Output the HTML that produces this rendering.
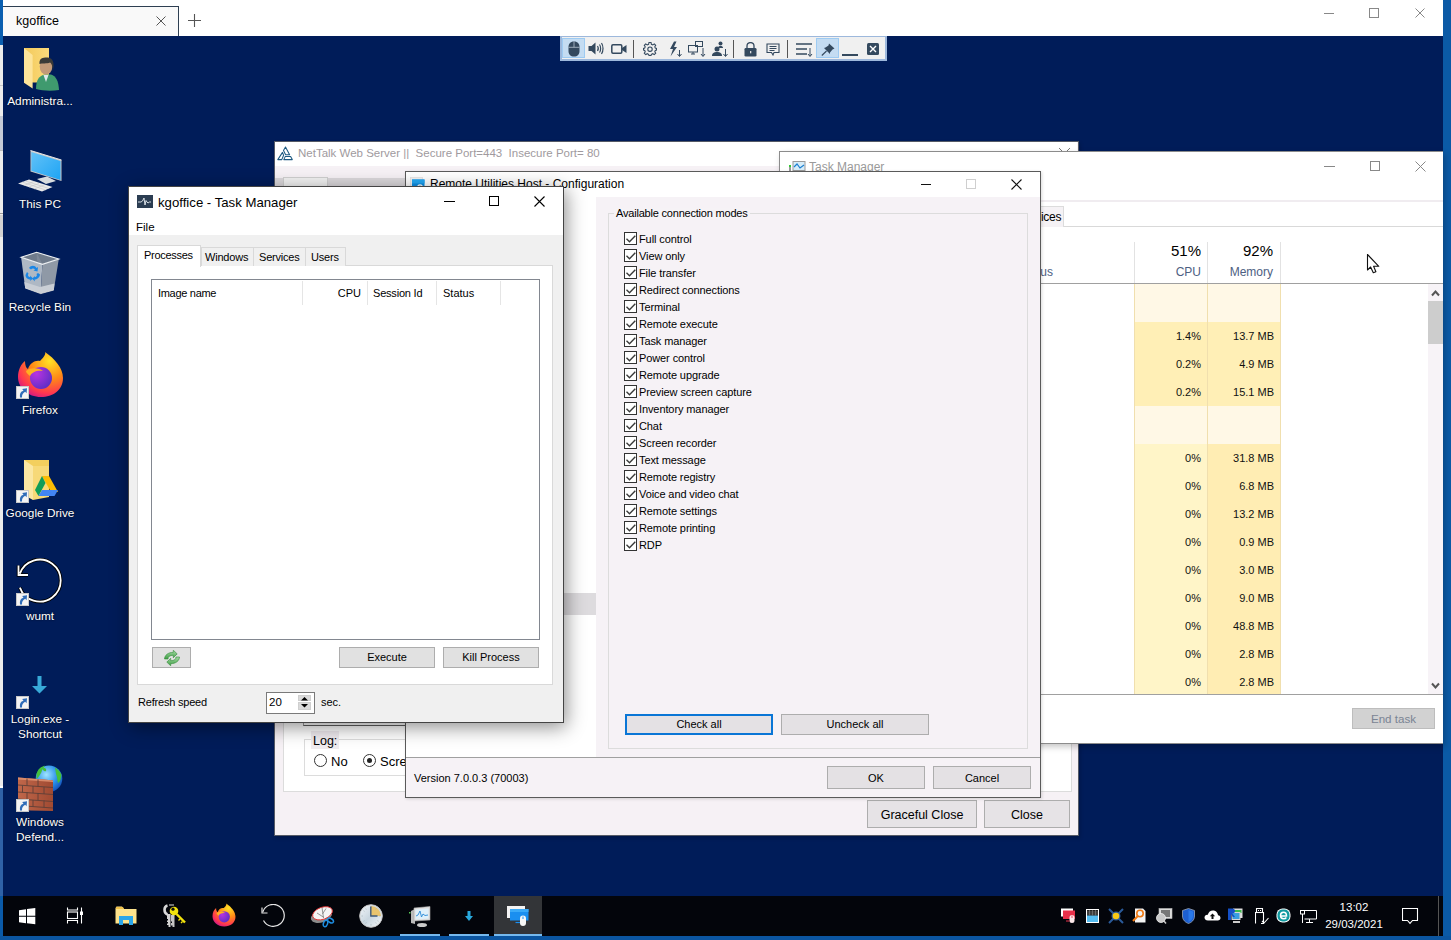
<!DOCTYPE html>
<html><head><meta charset="utf-8">
<style>
*{box-sizing:border-box;margin:0;padding:0}
html,body{width:1451px;height:940px;overflow:hidden;background:#fff;font-family:"Liberation Sans",sans-serif;color:#000}
.a{position:absolute}
.t{position:absolute;white-space:nowrap;line-height:1}
#desk{left:3px;top:36px;width:1440px;height:860px;background:#001c59}
#taskbar{left:3px;top:896px;width:1440px;height:40px;background:#03050b}
.lbl{position:absolute;color:#fff;font-size:11.5px;text-align:center;width:80px;left:0;line-height:15px;text-shadow:0 1px 2px #000}
.win{position:absolute;overflow:hidden;isolation:isolate}
.btn{position:absolute;background:#e1e1e1;border:1px solid #adadad;font-size:11px;text-align:center;color:#000}
.cb{position:absolute;width:13px;height:13px;border:1px solid #333;background:#fff}
</style></head><body>
<!-- left strip -->
<div class="a" style="left:0;top:0;width:3px;height:46px;background:#0a5fb0"></div>
<div class="a" style="left:0;top:45px;width:3px;height:743px;background:#ececec"></div>
<div class="a" style="left:0;top:85px;width:3px;height:1px;background:#c8c8c8"></div>
<div class="a" style="left:0;top:116px;width:3px;height:34px;background:#c4cad6"></div>
<div class="a" style="left:0;top:150px;width:3px;height:1px;background:#bbb"></div>
<div class="a" style="left:0;top:213px;width:3px;height:1px;background:#999"></div>
<div class="a" style="left:0;top:215px;width:3px;height:22px;background:#d2d2d2"></div>
<div class="a" style="left:0;top:786px;width:3px;height:2px;background:#fff"></div>
<div class="a" style="left:0;top:788px;width:3px;height:108px;background:#2f62a6"></div>
<div class="a" style="left:0;top:896px;width:3px;height:44px;background:#0a5aa8"></div>
<!-- right strip -->
<div class="a" style="left:1443px;top:0;width:8px;height:940px;background:#0b5aa6"></div>
<div class="a" style="left:0;top:936px;width:1451px;height:4px;background:#0b55a0"></div>

<!-- browser tab bar -->
<div class="a" style="left:3px;top:6px;width:176px;height:30px;background:#f9f9f9;border-top:1px solid #2e3f52;border-right:1px solid #2e3f52"></div>
<div class="t" style="left:16px;top:15px;font-size:12.5px;color:#000">kgoffice</div>

<div class="a" id="desk"></div>
<div class="a" id="taskbar"></div>

<!-- ============ Desktop icons ============ -->
<svg class="a" style="left:0;top:40px" width="80" height="55" viewBox="0 0 80 55">
  <defs><linearGradient id="fdg" x1="0" y1="0" x2="1" y2="0"><stop offset="0" stop-color="#f3c95a"/><stop offset="1" stop-color="#fbdb7c"/></linearGradient></defs>
  <path d="M24 8 H49 V42.5 H24Z" fill="url(#fdg)"/>
  <path d="M24 8 L32.6 15 L32.6 48.6 L24 42.7Z" fill="#fde49a"/>
  <path d="M36 49 C36 40 39 35.5 45 34.5 L51 34.5 C56 36 58.5 41 59 50 C52 51 43 51 36 49Z" fill="#3f9a6e"/>
  <path d="M43.5 35 L46 42 L48.5 35Z" fill="#dfe9ee"/>
  <ellipse cx="46" cy="26.5" rx="6.3" ry="8" fill="#c29a78"/>
  <path d="M39.5 24 C39 18 43 17.5 46.5 17.5 C51 17.5 54 20 53.5 26 L53 31 C52.5 27 52 23.5 50 22.5 C47 24 42 23 39.5 24Z" fill="#3a3a38"/>
</svg>
<div class="t" style="left:0;width:80px;text-align:center;top:96px;font-size:11.8px;color:#fff;text-shadow:0 0 2px rgba(0,0,0,.8)">Administra...</div>
<svg class="a" style="left:0;top:140px" width="80" height="60" viewBox="0 0 80 60">
  <defs><linearGradient id="pcg" x1="0" y1="0" x2="1" y2="1"><stop offset="0" stop-color="#62c2f8"/><stop offset="1" stop-color="#1ea4f4"/></linearGradient></defs>
  <path d="M30.5 10.5 L61.5 20 L61.5 41 L30.5 31.5Z" fill="#c8c8c8"/>
  <path d="M31.3 12 L60.5 21 L60.5 40 L31.3 30.8Z" fill="url(#pcg)"/>
  <path d="M30.5 10.5 L61.5 20" stroke="#e6e6e6" stroke-width="1"/>
  <path d="M37 39 L47 36.5 L56 41 L46 44Z" fill="#d8dcde"/>
  <path d="M18 43.5 L29 39.5 L52.5 47 L42 51.5Z" fill="#eaeaea"/>
  <path d="M22 42 L45.5 50 M25.5 41 L49 48.5 M24 45.5 L34 41.5 M29 47 L39 43.5 M34 49 L44 45" stroke="#c4c4c4" stroke-width="0.6"/>
</svg>
<div class="t" style="left:0;width:80px;text-align:center;top:199px;font-size:11.8px;color:#fff;text-shadow:0 0 2px rgba(0,0,0,.8)">This PC</div>
<svg class="a" style="left:0;top:240px" width="80" height="60" viewBox="0 0 80 60">
  <path d="M21.1 17.3 L42.4 24.3 L40.7 53.6 L25.2 48Z" fill="#aeb8c4"/>
  <path d="M42.4 24.3 L58.8 19 L53.8 50 L40.7 53.6Z" fill="#8f99a6"/>
  <path d="M21.1 17.3 L36.6 12.3 L58.8 19 L42.4 24.3Z" fill="#6f7b8b"/>
  <path d="M36.6 12.3 L37 21 L42.4 24.3Z" fill="#7e8998"/>
  <path d="M24.3 42 L40 47 L54.5 43.5 L53.8 50 L40.7 53.6 L25.2 48Z" fill="#c9ced5"/>
  <path d="M21.1 17.3 L36.6 12.3 L58.8 19 L42.4 24.3Z" fill="none" stroke="#eef1f3" stroke-width="1.1"/>
  <path d="M25.2 48 L40.7 53.6 L53.8 50" fill="none" stroke="#dcdcdc" stroke-width="0.8"/>
  <path d="M29 28 C31 25 35 25 36.5 28 L38 27 L37.5 31.5 L33.5 30.5 L35 29.5 C34 28 32 28 31 29.5Z" fill="#1a86e6"/>
  <path d="M27 32 L25.5 35 C25.5 38 28 39.5 30.5 39.5 L30 41 L33 38.5 L30 35.5 L30.3 37 C28.5 37 27.3 35.5 28.5 33.5Z" fill="#1a86e6"/>
  <path d="M38 33 L40 34.5 C39.5 38 37 39.5 34.5 39.5 L35 41.5 L32 38.8 L35 36 L34.8 37.3 C36.5 37 37.5 35.5 36.5 34Z" fill="#1a86e6"/>
</svg>
<div class="t" style="left:0;width:80px;text-align:center;top:302px;font-size:11.8px;color:#fff;text-shadow:0 0 2px rgba(0,0,0,.8)">Recycle Bin</div>
<svg class="a" style="left:17px;top:351px" width="47" height="47" viewBox="0 0 47 47">
  <defs><radialGradient id="ff1" cx="0.7" cy="0.2" r="0.9"><stop offset="0" stop-color="#ffe226"/><stop offset="0.45" stop-color="#ff8a16"/><stop offset="0.8" stop-color="#ff3750"/><stop offset="1" stop-color="#c8158c"/></radialGradient>
  <radialGradient id="ff2" cx="0.3" cy="0.3" r="0.8"><stop offset="0" stop-color="#b833e1"/><stop offset="1" stop-color="#5b2ec4"/></radialGradient></defs>
  <path d="M28 1 C38 8 46 17 46 27 C46 39 36 46 24 46 C11 46 1 37 1 26 C1 19 4 13 8 10 C8 14 9 17 11 18 C13 12 18 9 23 10 C27 6 29 3 28 1Z" fill="url(#ff1)"/>
  <circle cx="24" cy="27" r="11" fill="url(#ff2)"/>
  <path d="M9 20 C14 16 22 17 26 20 C20 19 15 21 13 25 C11 23 9 22 9 20Z" fill="#ffb020"/>
</svg>
<svg class="a" style="left:16px;top:386px" width="13" height="13" viewBox="0 0 13 13"><rect x="0.5" y="0.5" width="12" height="12" fill="#f4f4f4" stroke="#c8c8c8"/><path d="M4 11.5 C3.5 8 4.5 5.5 7.5 4.8 L6.2 3 L11 2.2 L10.6 7.2 L9.2 5.8 C7 6.8 5.8 8.8 6 11.5Z" fill="#2f6cb8"/></svg>
<div class="t" style="left:0;width:80px;text-align:center;top:405px;font-size:11.8px;color:#fff;text-shadow:0 0 2px rgba(0,0,0,.8)">Firefox</div>
<svg class="a" style="left:23px;top:459px" width="36" height="42" viewBox="0 0 36 42">
  <path d="M1 1 L26 1 L26 38 L1 38Z" fill="#f3cf5e"/>
  <path d="M1 1 L10 7 L10 41 L1 36Z" fill="#fbe7a3"/>
  <path d="M10 7 L26 7 L26 38 L10 41Z" fill="#f7d978"/>
  <path d="M19 17 L26 17 L35 33 L28 33Z" fill="#fbbc04"/>
  <path d="M19 17 L12 31 L15.5 37 L22.5 24Z" fill="#0f9d58"/>
  <path d="M15.5 37 L31.5 37 L35 31 L19 31Z" fill="#4285f4"/>
</svg>
<svg class="a" style="left:16px;top:490px" width="13" height="13" viewBox="0 0 13 13"><rect x="0.5" y="0.5" width="12" height="12" fill="#f4f4f4" stroke="#c8c8c8"/><path d="M4 11.5 C3.5 8 4.5 5.5 7.5 4.8 L6.2 3 L11 2.2 L10.6 7.2 L9.2 5.8 C7 6.8 5.8 8.8 6 11.5Z" fill="#2f6cb8"/></svg>
<div class="t" style="left:0;width:80px;text-align:center;top:508px;font-size:11.8px;color:#fff;text-shadow:0 0 2px rgba(0,0,0,.8)">Google Drive</div>
<svg class="a" style="left:16px;top:558px" width="48" height="48" viewBox="0 0 48 48"><g fill="none" stroke-linecap="butt"><path d="M3.9 15.6 A21 21 0 1 1 3.9 29.6 M2.5 7.4 V17 H12" stroke="#000" stroke-width="3.6"/><path d="M3.9 15.6 A21 21 0 1 1 3.9 29.6 M2.5 7.4 V17 H12" stroke="#fff" stroke-width="1.8"/></g></svg>
<svg class="a" style="left:16px;top:593px" width="13" height="13" viewBox="0 0 13 13"><rect x="0.5" y="0.5" width="12" height="12" fill="#f4f4f4" stroke="#c8c8c8"/><path d="M4 11.5 C3.5 8 4.5 5.5 7.5 4.8 L6.2 3 L11 2.2 L10.6 7.2 L9.2 5.8 C7 6.8 5.8 8.8 6 11.5Z" fill="#2f6cb8"/></svg>
<div class="t" style="left:0;width:80px;text-align:center;top:611px;font-size:11.8px;color:#fff;text-shadow:0 0 2px rgba(0,0,0,.8)">wumt</div>
<svg class="a" style="left:31px;top:676px" width="17" height="18" viewBox="0 0 17 18"><path d="M6.5 0 L10.5 0 L10.5 10 L16 10 L8.5 17.5 L1 10 L6.5 10Z" fill="#38aad8"/></svg>
<svg class="a" style="left:16px;top:696px" width="13" height="13" viewBox="0 0 13 13"><rect x="0.5" y="0.5" width="12" height="12" fill="#f4f4f4" stroke="#c8c8c8"/><path d="M4 11.5 C3.5 8 4.5 5.5 7.5 4.8 L6.2 3 L11 2.2 L10.6 7.2 L9.2 5.8 C7 6.8 5.8 8.8 6 11.5Z" fill="#2f6cb8"/></svg>
<div class="t" style="left:0;width:80px;text-align:center;top:714px;font-size:11.8px;color:#fff;text-shadow:0 0 2px rgba(0,0,0,.8)">Login.exe -</div><div class="t" style="left:0;width:80px;text-align:center;top:729px;font-size:11.8px;color:#fff;text-shadow:0 0 2px rgba(0,0,0,.8)">Shortcut</div>
<svg class="a" style="left:0;top:760px" width="80" height="56" viewBox="0 0 80 56">
  <defs><radialGradient id="glb" cx="0.4" cy="0.35" r="0.7"><stop offset="0" stop-color="#9fe4ff"/><stop offset="0.6" stop-color="#2a90e8"/><stop offset="1" stop-color="#1450b8"/></radialGradient>
  <linearGradient id="brk" x1="0" y1="0" x2="1" y2="0"><stop offset="0" stop-color="#c0674a"/><stop offset="1" stop-color="#a04a32"/></linearGradient></defs>
  <circle cx="49" cy="18.7" r="13.3" fill="url(#glb)"/>
  <path d="M36.5 14 C38 9 41 6.5 45 5.8 C44 8 42 9 41.5 12 C40 15 38 18 36.5 19Z M55 7.5 C58 9 60.5 12 61.5 15 C61 19 60 22 58 23 C57 20 57.5 17 56 14Z M42 8 C45 7 47 9 46 11 C44 12 43 10 42 8Z" fill="#44c03c"/>
  <path d="M18 17.5 L44 19.5 L53 20.5 L53 51 L30 50.5 L18 49Z" fill="url(#brk)"/>
  <path d="M18 17.5 L44 19.5 L53 20.5 L53 22 L18 19.5Z" fill="#d88a6a"/>
  <g stroke="#5e4038" stroke-width="0.9" fill="none">
    <path d="M18 25 L53 27.5 M18 32 L53 34.5 M18 39 L53 41.5 M18 45.5 L53 48"/>
    <path d="M27 18.5 V25.5 M38 19.5 V26.3 M22.5 25.5 V32.3 M33 26 V33 M44 27 V34 M27 32.3 V39.3 M38 33 V40 M22.5 39.3 V46 M33 40 V46.5 M44 40.5 V47.5"/>
  </g>
</svg>
<svg class="a" style="left:16px;top:799px" width="13" height="13" viewBox="0 0 13 13"><rect x="0.5" y="0.5" width="12" height="12" fill="#f4f4f4" stroke="#c8c8c8"/><path d="M4 11.5 C3.5 8 4.5 5.5 7.5 4.8 L6.2 3 L11 2.2 L10.6 7.2 L9.2 5.8 C7 6.8 5.8 8.8 6 11.5Z" fill="#2f6cb8"/></svg>
<div class="t" style="left:0;width:80px;text-align:center;top:817px;font-size:11.8px;color:#fff;text-shadow:0 0 2px rgba(0,0,0,.8)">Windows</div><div class="t" style="left:0;width:80px;text-align:center;top:832px;font-size:11.8px;color:#fff;text-shadow:0 0 2px rgba(0,0,0,.8)">Defend...</div>




<!-- ============ Taskbar ============ -->
<svg class="a" style="left:19px;top:908px" width="17" height="17" viewBox="0 0 17 17"><path d="M0 2.3 L7 1.3 L7 7.7 L0 7.7Z M8 1.1 L16.3 0 L16.3 7.7 L8 7.7Z M0 8.7 L7 8.7 L7 15.2 L0 14.3Z M8 8.7 L16.3 8.7 L16.3 16.3 L8 15.3Z" fill="#fff"/></svg>
<svg class="a" style="left:66px;top:907px" width="18" height="17" viewBox="0 0 18 17"><g fill="none" stroke="#fff" stroke-width="1.1"><path d="M1.5 0.5 V3 H11.5 V0.5"/><rect x="1.5" y="5" width="10" height="6.5"/><path d="M1.5 16.5 V13.5 H11.5 V16.5"/><path d="M15.5 0.5 V16.5"/></g><rect x="14" y="4.5" width="3" height="3.5" fill="#fff"/></svg>
<svg class="a" style="left:115px;top:906px" width="22" height="19" viewBox="0 0 22 19"><path d="M0.5 2 L0.5 17.5 L21.5 17.5 L21.5 3 L9 3 L7 0.5 L1.5 0.5Z" fill="#fde38c"/><path d="M1 1 L8 1 L9 3 L1 3Z" fill="#f0c24c"/><path d="M4 19 L4 10 L18 10 L18 19 L14 19 L14 14 L8 14 L8 19Z" fill="#2ba6ea"/></svg>
<svg class="a" style="left:158px;top:900px" width="32" height="30" viewBox="0 0 32 30">
<path d="M9.5 5.5 C5.5 6.5 5.5 13 9.5 14.5" stroke="#d8d8d8" stroke-width="2.6" fill="none"/>
<path d="M9 14 H12.5 V27 H10.5 V25 H9 V23.5 H10 V22 H9 V20.5 H10 V19 H9Z" fill="#d4d4d4"/>
<path d="M13 15 H16.5 V27 H14.5 V25.5 H13 V23 H14 V21.5 H13Z" fill="#c4c4c4"/>
<path d="M11 5 H16" stroke="#bbb" stroke-width="1.2"/>
<circle cx="16" cy="11" r="4.3" fill="#f2e30c"/>
<circle cx="15" cy="9.2" r="1.6" fill="#111"/>
<path d="M18.5 14 L27 22.5" stroke="#f2e30c" stroke-width="2.4"/>
<path d="M22 19 L20.5 20.5 M24.5 21.5 L23 23" stroke="#f2e30c" stroke-width="1.4"/>
</svg>
<svg class="a" style="left:212px;top:903px" width="24" height="24" viewBox="0 0 47 47"><path d="M28 1 C38 8 46 17 46 27 C46 39 36 46 24 46 C11 46 1 37 1 26 C1 19 4 13 8 10 C8 14 9 17 11 18 C13 12 18 9 23 10 C27 6 29 3 28 1Z" fill="url(#ff1)"/><circle cx="24" cy="27" r="11" fill="url(#ff2)"/><path d="M9 20 C14 16 22 17 26 20 C20 19 15 21 13 25 C11 23 9 22 9 20Z" fill="#ffb020"/></svg>
<svg class="a" style="left:260px;top:904px" width="25" height="24" viewBox="0 0 25 24"><path d="M2.8 8 A11 11 0 1 1 3.5 16.5" stroke="#e6e6e6" stroke-width="1.2" fill="none"/><path d="M2 3.5 L2 9 L7.5 9" stroke="#e6e6e6" stroke-width="1.2" fill="none"/></svg>
<svg class="a" style="left:310px;top:905px" width="25" height="23" viewBox="0 0 25 23"><ellipse cx="11.5" cy="11" rx="11" ry="6.3" transform="rotate(-20 11.5 11)" fill="#8a8a8a"/><ellipse cx="12.5" cy="8.3" rx="10.3" ry="6" transform="rotate(-20 12.5 8.3)" fill="#f4f4f4" stroke="#e03535" stroke-width="0.9"/><path d="M12 2.5 L13.5 13 M7 8 L14 12.5 M16 3.5 L12.5 9" stroke="#888" stroke-width="0.9"/><ellipse cx="15.5" cy="18.5" rx="2" ry="3.3" transform="rotate(20 15.5 18.5)" fill="none" stroke="#1e8de0" stroke-width="1.5"/><ellipse cx="20.5" cy="15.5" rx="3.2" ry="2" transform="rotate(30 20.5 15.5)" fill="none" stroke="#1e8de0" stroke-width="1.5"/></svg>
<svg class="a" style="left:359px;top:904px" width="24" height="24" viewBox="0 0 24 24"><defs><linearGradient id="clg" x1="0" y1="0" x2="1" y2="1"><stop offset="0" stop-color="#f4f7fa"/><stop offset="0.5" stop-color="#c9d6e0"/><stop offset="1" stop-color="#f7f9fb"/></linearGradient></defs><circle cx="12" cy="12" r="11.3" fill="url(#clg)" stroke="#c8c8c8" stroke-width="1"/><path d="M12 2 A10 10 0 0 1 22 12 L12 12Z" fill="#e9c46e"/><path d="M12 2.5 V3.8 M12 20.2 V21.5 M2.5 12 H3.8 M20.2 12 H21.5 M6.7 4.5 L7.3 5.5 M4.5 6.7 L5.5 7.3 M17.3 4.5 L16.7 5.5 M4.5 17.3 L5.5 16.7 M6.7 19.5 L7.3 18.5 M19.5 17.3 L18.5 16.7 M17.3 19.5 L16.7 18.5" stroke="#9aa" stroke-width="0.6"/><path d="M11.8 2.5 V12.5 M11.3 12 H18.5" stroke="#3f5a7a" stroke-width="1.4" fill="none"/></svg>
<svg class="a" style="left:408px;top:906px" width="24" height="21" viewBox="0 0 24 21"><path d="M3 5 L7 3 L7 18 L3 17Z" fill="#bbb"/><rect x="1" y="6" width="1.5" height="1.5" fill="#5c5"/><path d="M6 2 L22 0.5 L22 14 L6 15Z" fill="#e0e0e0" stroke="#aaa" stroke-width="0.6"/><path d="M7.5 3.5 L20.5 2.5 L20.5 12.5 L7.5 13.5Z" fill="#dff0fa"/><path d="M8 10 L10 9 L12 5 L13.5 11 L15 8 L17 9.5 L20 9" stroke="#2a8ad8" stroke-width="0.9" fill="none"/><ellipse cx="14" cy="19" rx="5" ry="2" fill="#ccc"/></svg>
<svg class="a" style="left:465px;top:911px" width="8" height="10" viewBox="0 0 8 10"><path d="M2.5 0 H5.5 V5 H8 L4 10 L0 5 H2.5Z" fill="#29a8dc"/></svg>
<div class="a" style="left:494px;top:896px;width:48px;height:40px;background:#333538"></div>
<svg class="a" style="left:506px;top:905px" width="24" height="22" viewBox="0 0 24 22"><rect x="1" y="1" width="18" height="12" fill="#f3f3f3"/><rect x="4" y="4" width="18.5" height="11.5" fill="#1a8ff0"/><rect x="4" y="4" width="18.5" height="3" fill="#3aaaf8"/><path d="M9.5 17.5 H15" stroke="#1a8ff0" stroke-width="1.2"/><rect x="14" y="10.5" width="6" height="10.5" rx="3" fill="#f6f6f6"/><path d="M17 11.5 V14" stroke="#1a8ff0" stroke-width="1"/></svg>
<div class="a" style="left:400px;top:934px;width:40px;height:2px;background:#76b9ed"></div>
<div class="a" style="left:449px;top:934px;width:40px;height:2px;background:#76b9ed"></div>
<div class="a" style="left:494px;top:934px;width:48px;height:2px;background:#76b9ed"></div>
<!-- tray -->
<svg class="a" style="left:1061px;top:908px" width="15" height="16" viewBox="0 0 15 16"><rect x="0" y="0.5" width="12" height="8" fill="#fff"/><rect x="2" y="2.5" width="12" height="8.5" fill="#e8304a"/><rect x="8.5" y="7" width="5" height="8" rx="2.5" fill="#fbe8ea"/><path d="M11 7.5 V10" stroke="#e8304a" stroke-width="0.8"/><path d="M5 13 H8.5" stroke="#e8304a" stroke-width="1"/></svg>
<svg class="a" style="left:1086px;top:909px" width="13" height="14" viewBox="0 0 13 14"><rect x="0.5" y="0.5" width="12" height="13" fill="#55bdf2" stroke="#fff"/><rect x="1" y="1" width="11" height="5.5" fill="#222"/><path d="M1 3 H12 M1 5 H12 M3.5 1 V6.5 M6.5 1 V6.5 M9.5 1 V6.5" stroke="#888" stroke-width="0.6"/></svg>
<svg class="a" style="left:1108px;top:908px" width="16" height="16" viewBox="0 0 16 16"><path d="M1 1 L15 15 M15 1 L1 15" stroke="#2a5a9a" stroke-width="2"/><circle cx="8" cy="8" r="4.5" fill="#2a5a9a"/><circle cx="8" cy="8" r="3.3" fill="#f6c816"/></svg>
<svg class="a" style="left:1132px;top:908px" width="14" height="15" viewBox="0 0 14 15"><path d="M3 0.5 H11 L13.5 3 V14.5 H3Z" fill="#f4f4f4"/><circle cx="8" cy="5.5" r="3.2" fill="none" stroke="#f07a14" stroke-width="1.6"/><path d="M5.8 8 L1 13" stroke="#f07a14" stroke-width="2"/></svg>
<svg class="a" style="left:1156px;top:908px" width="17" height="16" viewBox="0 0 17 16"><rect x="3" y="0.5" width="13" height="10" fill="#dcdcdc" stroke="#bbb" stroke-width="0.6"/><rect x="5" y="2" width="9" height="7" fill="#777"/><circle cx="5" cy="10" r="4.5" fill="#c8c8c8" stroke="#eee" stroke-width="0.8"/><path d="M8 13 L10 15.5" stroke="#ccc" stroke-width="1.4"/></svg>
<svg class="a" style="left:1182px;top:908px" width="13" height="16" viewBox="0 0 13 16"><path d="M6.5 0.5 L12.5 2.5 V8 C12.5 12 9.5 14.5 6.5 15.5 C3.5 14.5 0.5 12 0.5 8 V2.5Z" fill="#1d5fd0" stroke="#9aa4b4" stroke-width="0.8"/><path d="M6.5 2 L11 3.5 V8 C11 11 9 13 6.5 14Z" fill="#2a78e8"/></svg>
<svg class="a" style="left:1204px;top:910px" width="17" height="11" viewBox="0 0 17 11"><path d="M4 10.5 C1.5 10.5 0.5 9 0.5 7.5 C0.5 5.8 2 4.5 3.8 4.8 C4.5 2 6.5 0.5 9 0.5 C12 0.5 13.8 2.8 14 5.2 C15.5 5.3 16.5 6.5 16.5 8 C16.5 9.5 15.3 10.5 13.8 10.5Z" fill="#fff"/><path d="M8.5 3.5 L5.8 6.3 H7.5 V9 H9.5 V6.3 H11.2Z" fill="#111"/></svg>
<svg class="a" style="left:1228px;top:908px" width="15" height="15" viewBox="0 0 15 15"><rect x="5" y="0.5" width="9.5" height="9.5" fill="#e0e0e0"/><rect x="6" y="2" width="7.5" height="3" fill="#3cbc4c"/><rect x="3.5" y="4" width="9" height="8" fill="#d8d8d8"/><rect x="4.5" y="5" width="7" height="6" fill="#3a9ee0"/><path d="M0 0.5 H4.5 C6 0.5 7 1.5 7 3 C7 4.5 6 5.5 4.5 5.5 L7 9 H4.8 L3 6 V12 H0Z" fill="#1450c8"/><rect x="5" y="13" width="7" height="2" fill="#ccc"/></svg>
<svg class="a" style="left:1255px;top:908px" width="14" height="16" viewBox="0 0 14 16"><g fill="none" stroke="#fff" stroke-width="1.1"><rect x="1.5" y="0.5" width="6" height="4"/><path d="M0.5 15.5 V4.5 H8.5 V15.5 H6"/><path d="M7 13 L9 15 L13.5 10"/></g><rect x="3" y="2" width="1" height="1" fill="#fff"/><rect x="5" y="2" width="1" height="1" fill="#fff"/></svg>
<svg class="a" style="left:1276px;top:908px" width="15" height="15" viewBox="0 0 15 15"><rect x="0.5" y="0.5" width="14" height="14" rx="6" fill="#fff"/><rect x="1.5" y="1.5" width="12" height="12" rx="5" fill="#109aa0"/><path d="M4.5 8 H10.5 C10.5 5.5 9.3 4.3 7.5 4.3 C5.7 4.3 4.5 5.8 4.5 7.6 C4.5 9.6 5.8 10.8 7.6 10.8 C8.8 10.8 9.8 10.3 10.3 9.5" fill="none" stroke="#fff" stroke-width="1.5"/></svg>
<svg class="a" style="left:1300px;top:909px" width="17" height="14" viewBox="0 0 17 14"><g fill="none" stroke="#fff" stroke-width="1"><rect x="0.5" y="1.5" width="4" height="3.5"/><path d="M4.5 1.5 H16.5 V10 H4.5 M2.5 5 V14 M6 13.5 H13 M9.5 10 V13.5"/></g></svg>
<div class="t" style="left:1324px;width:60px;text-align:center;top:902px;font-size:11.5px;color:#fff">13:02</div>
<div class="t" style="left:1324px;width:60px;text-align:center;top:919px;font-size:11.5px;color:#fff">29/03/2021</div>
<svg class="a" style="left:1402px;top:908px" width="17" height="17" viewBox="0 0 17 17"><path d="M0.5 0.5 H15.5 V12.5 H10.5 L8 15.3 L5.5 12.5 H0.5Z" fill="none" stroke="#fff" stroke-width="1.1"/></svg>
<div class="a" style="left:1438px;top:896px;width:1px;height:40px;background:#555"></div>

<!-- ============ RDP toolbar ============ -->
<div class="a" style="left:560px;top:36px;width:327px;height:25px;background:#f0f0f0;border:2px solid #9db8dc;border-top:1px solid #9db8dc"></div>
<div class="a" style="left:562px;top:38px;width:23px;height:20px;background:#c4dcf2;border:1px solid #9ecbf2"></div>
<div class="a" style="left:816px;top:38px;width:23px;height:20px;background:#c4dcf2;border:1px solid #9ecbf2"></div>
<svg class="a" style="left:568px;top:41px" width="12" height="16" viewBox="0 0 12 16"><path d="M6 0.5 C10 0.5 11.5 3 11.5 6 V10 C11.5 13.5 9.5 15.5 6 15.5 C2.5 15.5 0.5 13.5 0.5 10 V6 C0.5 3 2 0.5 6 0.5Z" fill="#34495e"/><path d="M0.5 6.3 H11.5 M6 0.5 V6.3" stroke="#a8b6c4" stroke-width="0.9"/></svg>
<svg class="a" style="left:588px;top:42px" width="16" height="13" viewBox="0 0 16 13"><path d="M0.5 4 H3.5 L7.5 0.5 V12.5 L3.5 9 H0.5Z" fill="#34495e"/><path d="M9.5 4 C10.5 5.5 10.5 7.5 9.5 9 M11.5 2.5 C13 4.5 13 8.5 11.5 10.5 M13.5 1 C15.5 4 15.5 9 13.5 12" stroke="#34495e" stroke-width="1.2" fill="none"/></svg>
<svg class="a" style="left:611px;top:44px" width="16" height="10" viewBox="0 0 16 10"><rect x="0.8" y="0.8" width="10" height="8.4" rx="1.2" fill="none" stroke="#34495e" stroke-width="1.5"/><path d="M11 4 L15.5 1 V9 L11 6Z" fill="#34495e"/></svg>
<div class="a" style="left:633px;top:40px;width:1px;height:18px;background:#555"></div>
<svg class="a" style="left:643px;top:42px" width="14" height="14" viewBox="0 0 14 14"><path d="M6 0.5 H8 L8.4 2.3 L9.8 2.9 L11.3 1.9 L12.7 3.3 L11.8 4.8 L12.3 6.1 L13.5 6.5 V8 L12.3 8.4 L11.8 9.7 L12.7 11.2 L11.3 12.6 L9.8 11.7 L8.4 12.3 L8 13.5 H6 L5.6 12.3 L4.2 11.7 L2.7 12.6 L1.3 11.2 L2.2 9.7 L1.7 8.4 L0.5 8 V6.5 L1.7 6.1 L2.2 4.8 L1.3 3.3 L2.7 1.9 L4.2 2.9 L5.6 2.3Z" fill="none" stroke="#34495e" stroke-width="1.1"/><circle cx="7" cy="7.2" r="2.2" fill="none" stroke="#34495e" stroke-width="1.1"/></svg>
<svg class="a" style="left:669px;top:41px" width="13" height="16" viewBox="0 0 13 16"><path d="M5 0.5 L1 8 H4 L1.5 15.5 L8 6 H5 L7.5 0.5Z" fill="#34495e"/><path d="M10.5 9 V15 M8.5 13 L10.5 15.5 L12.5 13" stroke="#34495e" stroke-width="1" fill="none"/></svg>
<svg class="a" style="left:688px;top:41px" width="18" height="16" viewBox="0 0 18 16"><g fill="none" stroke="#34495e" stroke-width="1"><rect x="7.5" y="0.5" width="7" height="5"/><rect x="0.5" y="4.5" width="9" height="6.5"/><path d="M5 11 V13 M3 13 H7 M15 7 V15 M13 13 L15 15.5 L17 13"/></g></svg>
<svg class="a" style="left:711px;top:41px" width="17" height="16" viewBox="0 0 17 16"><circle cx="6" cy="8" r="2.5" fill="#34495e"/><path d="M1 15 C1 12 3 11 6 11 C9 11 11 12 11 15Z" fill="#34495e"/><circle cx="9.5" cy="2.5" r="2" fill="#34495e"/><path d="M7 7 C7 5.5 8 5 9.5 5 C11 5 12 5.5 12 7Z" fill="#34495e"/><path d="M14.5 8 V15 M12.5 13 L14.5 15.5 L16.5 13" stroke="#34495e" stroke-width="1" fill="none"/></svg>
<div class="a" style="left:733px;top:40px;width:1px;height:18px;background:#555"></div>
<svg class="a" style="left:744px;top:42px" width="13" height="15" viewBox="0 0 13 15"><path d="M3 6 V4 C3 1.5 4.5 0.6 6.5 0.6 C8.5 0.6 10 1.5 10 4 V6" stroke="#34495e" stroke-width="1.3" fill="none"/><rect x="0.5" y="6" width="12" height="8.5" rx="1.3" fill="#34495e"/><rect x="6" y="9" width="1.3" height="2.3" fill="#ddd"/></svg>
<svg class="a" style="left:766px;top:43px" width="14" height="13" viewBox="0 0 14 13"><path d="M1 1 H13 V9.5 H8 L7 12 L5.5 9.5 H1Z" fill="none" stroke="#34495e" stroke-width="1.1"/><path d="M3.5 3.5 H10.5 M3.5 5.5 H10.5 M3.5 7.5 H8.5" stroke="#34495e" stroke-width="1"/></svg>
<div class="a" style="left:787px;top:40px;width:1px;height:18px;background:#555"></div>
<svg class="a" style="left:796px;top:43px" width="17" height="14" viewBox="0 0 17 14"><path d="M0 1 H16 M0 6 H11 M0 11 H11" stroke="#34495e" stroke-width="1.6"/><path d="M14 5 V13 M12 11 L14 13.5 L16 11" stroke="#34495e" stroke-width="1" fill="none"/></svg>
<svg class="a" style="left:821px;top:43px" width="14" height="13" viewBox="0 0 14 13"><path d="M8 0.5 L13.5 5.5 L11.5 6.5 L9 9.5 L9 11 L3 5 L4.5 4.5 L7.5 2.5Z" fill="#34495e"/><path d="M5.5 8 L0.8 12.5" stroke="#34495e" stroke-width="1.1"/></svg>
<div class="a" style="left:842px;top:54px;width:16px;height:1.5px;background:#34495e"></div>
<svg class="a" style="left:867px;top:43px" width="12" height="12" viewBox="0 0 12 12"><rect width="12" height="12" rx="1.5" fill="#34495e"/><path d="M3 3 L9 9 M9 3 L3 9" stroke="#fff" stroke-width="1.4"/></svg>

<!-- browser chrome bits -->
<svg class="a" style="left:156px;top:16px" width="10" height="10"><path d="M0.5 0.5L9.5 9.5M9.5 0.5L0.5 9.5" stroke="#555" stroke-width="1"/></svg>
<svg class="a" style="left:188px;top:14px" width="13" height="13"><path d="M6.5 0V13M0 6.5H13" stroke="#555" stroke-width="1.1"/></svg>
<div class="a" style="left:1324px;top:13px;width:10px;height:1px;background:#888"></div>
<div class="a" style="left:1369px;top:8px;width:10px;height:10px;border:1px solid #888"></div>
<svg class="a" style="left:1415px;top:8px" width="10" height="10"><path d="M0.5 0.5L9.5 9.5M9.5 0.5L0.5 9.5" stroke="#888" stroke-width="1"/></svg>

<!-- ============ NetTalk window ============ -->
<div class="win" style="left:274px;top:141px;width:805px;height:695px;background:#f6f1f5;box-shadow:1px 2px 4px rgba(0,0,0,.2)"><div class="a bd" style="left:0;top:0;right:0;bottom:0;border:1px solid #555a66;z-index:50"></div>
  <div class="a" style="left:0;top:0;width:803px;height:25px;background:#fff"></div>
  <svg class="a" style="left:3px;top:5px" width="17" height="15" viewBox="0 0 17 15"><g fill="none" stroke="#1d5a82" stroke-width="1.05" stroke-linejoin="round"><path d="M8.5 1 L12.6 8.7 H8.6 L6.5 4.6Z"/><path d="M5.5 6.4 L0.8 13.6 H4.8 L6.6 9.3Z"/><path d="M8.3 10.4 H13.6 L15.3 13.6 H6.8Z"/></g></svg>
  <div class="t" style="left:24px;top:7px;font-size:11.5px;color:#a09a9e">NetTalk Web Server ||&nbsp; Secure Port=443&nbsp; Insecure Port= 80</div>
  <svg class="a" style="left:785px;top:7px" width="11" height="11"><path d="M0 0L11 11M11 0L0 11" stroke="#777" stroke-width="1"/></svg>
  <!-- tab strip -->
  <div class="a" style="left:0;top:37px;width:803px;height:10px;background:#dcd9dc"></div>
  <div class="a" style="left:9px;top:36px;width:45px;height:12px;background:#f3f3f3;border:1px solid #d0d0d0;border-bottom:none"></div>
  <!-- inner white panel -->
  <div class="a" style="left:9px;top:520px;width:789px;height:131px;background:#fff;border:1px solid #dcdcdc"></div>
  <div class="a" style="left:29px;top:520px;width:102px;height:65px;border-bottom:1px solid #606060;border-left:1px solid #a0a0a0;background:#fff"></div>
  <!-- Log group -->
  <div class="a" style="left:30px;top:598px;width:300px;height:37px;border:1px solid #dcdcdc"></div>
  <div class="t" style="left:37px;top:590px;font-size:12.5px;background:#f0ecf0;padding:4px 2px 1px">Log:</div>
  <div class="a" style="left:40px;top:613px;width:13px;height:13px;border:1px solid #333;border-radius:50%;background:#fff"></div>
  <div class="t" style="left:57px;top:614px;font-size:13px">No</div>
  <div class="a" style="left:89px;top:613px;width:13px;height:13px;border:1px solid #333;border-radius:50%;background:#fff"><div class="a" style="left:3px;top:3px;width:5px;height:5px;border-radius:50%;background:#222"></div></div>
  <div class="t" style="left:106px;top:614px;font-size:13px">Screen</div>
  <!-- buttons -->
  <div class="btn" style="left:593px;top:659px;width:110px;height:28px;font-size:12.5px;line-height:28px;background:#e6e3e6">Graceful Close</div>
  <div class="btn" style="left:710px;top:659px;width:86px;height:28px;font-size:12.5px;line-height:28px;background:#e6e3e6">Close</div>
</div>


<!-- ============ Big Task Manager ============ -->
<div class="win" style="left:779px;top:151px;width:664px;height:593px;background:#fff;box-shadow:2px 3px 6px rgba(0,0,0,.22)"><div class="a bd" style="left:0;top:0;right:0;bottom:0;border:1px solid #8c8c8c;border-right:none;z-index:50"></div>
  <svg class="a" style="left:9px;top:9px" width="18" height="14" viewBox="0 0 18 14"><rect x="5" y="1.5" width="12" height="9" fill="#d6ecf8" stroke="#9a9a9a"/><path d="M6 7 L9 4 L12 8 L16 5" stroke="#1c7fd0" fill="none" stroke-width="1.2"/><rect x="1" y="6" width="2" height="7" fill="#999"/><rect x="1" y="5" width="2" height="2" fill="#3c3"/></svg>
  <div class="t" style="left:30px;top:10px;font-size:12px;color:#9a9a9a">Task Manager</div>
  <div class="a" style="left:545px;top:15px;width:11px;height:1px;background:#888"></div>
  <div class="a" style="left:591px;top:10px;width:10px;height:10px;border:1px solid #888"></div>
  <svg class="a" style="left:636px;top:10px" width="11" height="11"><path d="M0.5 0.5L10.5 10.5M10.5 0.5L0.5 10.5" stroke="#888" stroke-width="1"/></svg>
  <div class="a" style="left:0;top:49px;width:664px;height:2px;background:#f0ecf0"></div>
  <!-- tabs -->
  <div class="a" style="left:0;top:75px;width:664px;height:1px;background:#d9d9d9"></div>
  <div class="a" style="left:200px;top:55px;width:85px;height:21px;background:#f5f2f5;border:1px solid #dcdcdc;border-bottom:none"></div>
  <div class="t" style="left:262px;top:60px;font-size:12px;color:#000;letter-spacing:-0.3px">ices</div>
  <!-- header -->
  <div class="t" style="left:355px;width:67px;text-align:right;top:92px;font-size:15px;color:#000">51%</div>
  <div class="t" style="left:355px;width:67px;text-align:right;top:115px;font-size:12px;color:#4d6082">CPU</div>
  <div class="t" style="left:428px;width:66px;text-align:right;top:92px;font-size:15px;color:#000">92%</div>
  <div class="t" style="left:428px;width:66px;text-align:right;top:115px;font-size:12px;color:#4d6082">Memory</div>
  <div class="t" style="left:200px;width:74px;text-align:right;top:115px;font-size:12px;color:#4d6082">Status</div>
  <div class="a" style="left:355px;top:91px;width:1px;height:41px;background:#e2e2e2"></div>
  <div class="a" style="left:428px;top:91px;width:1px;height:41px;background:#e2e2e2"></div>
  <div class="a" style="left:501px;top:91px;width:1px;height:41px;background:#e2e2e2"></div>
  <div class="a" style="left:0;top:132px;width:664px;height:1px;background:#a0a0a0"></div>
  <div class="a" style="left:355px;top:133px;width:73px;height:38px;background:#fff8e6"></div>
<div class="a" style="left:428px;top:133px;width:73px;height:38px;background:#fff8e6"></div>
<div class="a" style="left:355px;top:171px;width:73px;height:28px;background:#ffefb6"></div>
<div class="a" style="left:428px;top:171px;width:73px;height:28px;background:#ffefb6"></div>
<div class="t" style="left:355px;width:67px;text-align:right;top:180px;font-size:11px;color:#111">1.4%</div>
<div class="t" style="left:428px;width:67px;text-align:right;top:180px;font-size:11px;color:#111">13.7 MB</div>
<div class="a" style="left:355px;top:199px;width:73px;height:28px;background:#ffefb6"></div>
<div class="a" style="left:428px;top:199px;width:73px;height:28px;background:#ffefb6"></div>
<div class="t" style="left:355px;width:67px;text-align:right;top:208px;font-size:11px;color:#111">0.2%</div>
<div class="t" style="left:428px;width:67px;text-align:right;top:208px;font-size:11px;color:#111">4.9 MB</div>
<div class="a" style="left:355px;top:227px;width:73px;height:28px;background:#ffefb6"></div>
<div class="a" style="left:428px;top:227px;width:73px;height:28px;background:#ffefb6"></div>
<div class="t" style="left:355px;width:67px;text-align:right;top:236px;font-size:11px;color:#111">0.2%</div>
<div class="t" style="left:428px;width:67px;text-align:right;top:236px;font-size:11px;color:#111">15.1 MB</div>
<div class="a" style="left:355px;top:255px;width:73px;height:38px;background:#fff8e6"></div>
<div class="a" style="left:428px;top:255px;width:73px;height:38px;background:#fff8e6"></div>
<div class="a" style="left:355px;top:293px;width:73px;height:28px;background:#fff5c8"></div>
<div class="a" style="left:428px;top:293px;width:73px;height:28px;background:#ffedb3"></div>
<div class="t" style="left:355px;width:67px;text-align:right;top:302px;font-size:11px;color:#111">0%</div>
<div class="t" style="left:428px;width:67px;text-align:right;top:302px;font-size:11px;color:#111">31.8 MB</div>
<div class="a" style="left:355px;top:321px;width:73px;height:28px;background:#fff5c8"></div>
<div class="a" style="left:428px;top:321px;width:73px;height:28px;background:#ffedb3"></div>
<div class="t" style="left:355px;width:67px;text-align:right;top:330px;font-size:11px;color:#111">0%</div>
<div class="t" style="left:428px;width:67px;text-align:right;top:330px;font-size:11px;color:#111">6.8 MB</div>
<div class="a" style="left:355px;top:349px;width:73px;height:28px;background:#fff5c8"></div>
<div class="a" style="left:428px;top:349px;width:73px;height:28px;background:#ffedb3"></div>
<div class="t" style="left:355px;width:67px;text-align:right;top:358px;font-size:11px;color:#111">0%</div>
<div class="t" style="left:428px;width:67px;text-align:right;top:358px;font-size:11px;color:#111">13.2 MB</div>
<div class="a" style="left:355px;top:377px;width:73px;height:28px;background:#fff5c8"></div>
<div class="a" style="left:428px;top:377px;width:73px;height:28px;background:#ffedb3"></div>
<div class="t" style="left:355px;width:67px;text-align:right;top:386px;font-size:11px;color:#111">0%</div>
<div class="t" style="left:428px;width:67px;text-align:right;top:386px;font-size:11px;color:#111">0.9 MB</div>
<div class="a" style="left:355px;top:405px;width:73px;height:28px;background:#fff5c8"></div>
<div class="a" style="left:428px;top:405px;width:73px;height:28px;background:#ffedb3"></div>
<div class="t" style="left:355px;width:67px;text-align:right;top:414px;font-size:11px;color:#111">0%</div>
<div class="t" style="left:428px;width:67px;text-align:right;top:414px;font-size:11px;color:#111">3.0 MB</div>
<div class="a" style="left:355px;top:433px;width:73px;height:28px;background:#fff5c8"></div>
<div class="a" style="left:428px;top:433px;width:73px;height:28px;background:#ffedb3"></div>
<div class="t" style="left:355px;width:67px;text-align:right;top:442px;font-size:11px;color:#111">0%</div>
<div class="t" style="left:428px;width:67px;text-align:right;top:442px;font-size:11px;color:#111">9.0 MB</div>
<div class="a" style="left:355px;top:461px;width:73px;height:28px;background:#fff5c8"></div>
<div class="a" style="left:428px;top:461px;width:73px;height:28px;background:#ffedb3"></div>
<div class="t" style="left:355px;width:67px;text-align:right;top:470px;font-size:11px;color:#111">0%</div>
<div class="t" style="left:428px;width:67px;text-align:right;top:470px;font-size:11px;color:#111">48.8 MB</div>
<div class="a" style="left:355px;top:489px;width:73px;height:28px;background:#fff5c8"></div>
<div class="a" style="left:428px;top:489px;width:73px;height:28px;background:#ffedb3"></div>
<div class="t" style="left:355px;width:67px;text-align:right;top:498px;font-size:11px;color:#111">0%</div>
<div class="t" style="left:428px;width:67px;text-align:right;top:498px;font-size:11px;color:#111">2.8 MB</div>
<div class="a" style="left:355px;top:517px;width:73px;height:28px;background:#fff5c8"></div>
<div class="a" style="left:428px;top:517px;width:73px;height:28px;background:#ffedb3"></div>
<div class="t" style="left:355px;width:67px;text-align:right;top:526px;font-size:11px;color:#111">0%</div>
<div class="t" style="left:428px;width:67px;text-align:right;top:526px;font-size:11px;color:#111">2.8 MB</div>
  <div class="a" style="left:355px;top:133px;width:1px;height:410px;background:#f0dfae"></div>
  <div class="a" style="left:428px;top:133px;width:1px;height:410px;background:#f0dfae"></div>
  <div class="a" style="left:501px;top:133px;width:1px;height:410px;background:#f0dfae"></div>
  <!-- scrollbar -->
  <div class="a" style="left:649px;top:133px;width:15px;height:410px;background:#f7f3f7"></div>
  <div class="a" style="left:649px;top:150px;width:15px;height:43px;background:#cdcdcd"></div>
  <svg class="a" style="left:652px;top:138px" width="9" height="8"><path d="M1 6.5L4.5 2.5L8 6.5" stroke="#555" fill="none" stroke-width="2"/></svg>
  <svg class="a" style="left:652px;top:531px" width="9" height="8"><path d="M1 1.5L4.5 5.5L8 1.5" stroke="#555" fill="none" stroke-width="2"/></svg>
  <div class="a" style="left:0;top:543px;width:664px;height:50px;background:#fff"></div><div class="a" style="left:0;top:543px;width:664px;height:1px;background:#a0a0a0"></div>
  <div class="btn" style="left:573px;top:557px;width:83px;height:21px;background:#d2d2d2;border-color:#bdbdbd;color:#7a8494;font-size:11.6px;line-height:20px">End task</div>
</div>


<!-- ============ Remote Utilities Config ============ -->
<div class="win" style="left:405px;top:171px;width:636px;height:627px;background:#fff;box-shadow:1px 1px 3px rgba(0,0,0,.15)"><div class="a bd" style="left:0;top:0;right:0;bottom:0;border:1px solid #5a5a5a;z-index:50"></div>
  <svg class="a" style="left:4px;top:5px" width="18" height="16" viewBox="0 0 18 16"><rect x="1.5" y="1.5" width="12" height="9" fill="#f4f4f4" stroke="#e6e2e0" stroke-width="0.8"/><rect x="3" y="3.5" width="12.5" height="12" fill="#0d8fe6"/><rect x="3" y="3.5" width="12.5" height="4" fill="#22a8f5"/><circle cx="11" cy="11" r="2.8" fill="#fff"/><rect x="10.5" y="9.5" width="1" height="2.5" fill="#0d8fe6"/></svg>
  <div class="t" style="left:25px;top:7px;font-size:12px;color:#000">Remote Utilities Host - Configuration</div>
  <div class="a" style="left:516px;top:13px;width:10px;height:1px;background:#111"></div>
  <div class="a" style="left:561px;top:8px;width:10px;height:10px;border:1px solid #cfcfcf"></div>
  <svg class="a" style="left:606px;top:8px" width="11" height="11"><path d="M0.5 0.5L10.5 10.5M10.5 0.5L0.5 10.5" stroke="#111" stroke-width="1.1"/></svg>
  <!-- nav selected item -->
  <div class="a" style="left:150px;top:422px;width:41px;height:22px;background:#dddbde"></div>
  <!-- content panel -->
  <div class="a" style="left:191px;top:26px;width:444px;height:560px;background:#f6f2f6"></div>
  <div class="a" style="left:203px;top:42px;width:420px;height:536px;border:1px solid #dcdcdc"></div>
  <div class="t" style="left:209px;top:37px;font-size:11px;background:#f6f3f6;padding:0 2px;letter-spacing:-0.2px">Available connection modes</div>
  <div class="a cb" style="left:219px;top:61px"><svg width="11" height="11" class="a" style="left:0;top:0"><path d="M1.5 5.8L4.5 8.7L10.3 2.8" stroke="#3a3a3a" stroke-width="1.4" fill="none"/></svg></div><div class="t" style="left:234px;top:63px;font-size:11px;letter-spacing:-0.1px">Full control</div>
  <div class="a cb" style="left:219px;top:78px"><svg width="11" height="11" class="a" style="left:0;top:0"><path d="M1.5 5.8L4.5 8.7L10.3 2.8" stroke="#3a3a3a" stroke-width="1.4" fill="none"/></svg></div><div class="t" style="left:234px;top:80px;font-size:11px;letter-spacing:-0.1px">View only</div>
  <div class="a cb" style="left:219px;top:95px"><svg width="11" height="11" class="a" style="left:0;top:0"><path d="M1.5 5.8L4.5 8.7L10.3 2.8" stroke="#3a3a3a" stroke-width="1.4" fill="none"/></svg></div><div class="t" style="left:234px;top:97px;font-size:11px;letter-spacing:-0.1px">File transfer</div>
  <div class="a cb" style="left:219px;top:112px"><svg width="11" height="11" class="a" style="left:0;top:0"><path d="M1.5 5.8L4.5 8.7L10.3 2.8" stroke="#3a3a3a" stroke-width="1.4" fill="none"/></svg></div><div class="t" style="left:234px;top:114px;font-size:11px;letter-spacing:-0.1px">Redirect connections</div>
  <div class="a cb" style="left:219px;top:129px"><svg width="11" height="11" class="a" style="left:0;top:0"><path d="M1.5 5.8L4.5 8.7L10.3 2.8" stroke="#3a3a3a" stroke-width="1.4" fill="none"/></svg></div><div class="t" style="left:234px;top:131px;font-size:11px;letter-spacing:-0.1px">Terminal</div>
  <div class="a cb" style="left:219px;top:146px"><svg width="11" height="11" class="a" style="left:0;top:0"><path d="M1.5 5.8L4.5 8.7L10.3 2.8" stroke="#3a3a3a" stroke-width="1.4" fill="none"/></svg></div><div class="t" style="left:234px;top:148px;font-size:11px;letter-spacing:-0.1px">Remote execute</div>
  <div class="a cb" style="left:219px;top:163px"><svg width="11" height="11" class="a" style="left:0;top:0"><path d="M1.5 5.8L4.5 8.7L10.3 2.8" stroke="#3a3a3a" stroke-width="1.4" fill="none"/></svg></div><div class="t" style="left:234px;top:165px;font-size:11px;letter-spacing:-0.1px">Task manager</div>
  <div class="a cb" style="left:219px;top:180px"><svg width="11" height="11" class="a" style="left:0;top:0"><path d="M1.5 5.8L4.5 8.7L10.3 2.8" stroke="#3a3a3a" stroke-width="1.4" fill="none"/></svg></div><div class="t" style="left:234px;top:182px;font-size:11px;letter-spacing:-0.1px">Power control</div>
  <div class="a cb" style="left:219px;top:197px"><svg width="11" height="11" class="a" style="left:0;top:0"><path d="M1.5 5.8L4.5 8.7L10.3 2.8" stroke="#3a3a3a" stroke-width="1.4" fill="none"/></svg></div><div class="t" style="left:234px;top:199px;font-size:11px;letter-spacing:-0.1px">Remote upgrade</div>
  <div class="a cb" style="left:219px;top:214px"><svg width="11" height="11" class="a" style="left:0;top:0"><path d="M1.5 5.8L4.5 8.7L10.3 2.8" stroke="#3a3a3a" stroke-width="1.4" fill="none"/></svg></div><div class="t" style="left:234px;top:216px;font-size:11px;letter-spacing:-0.1px">Preview screen capture</div>
  <div class="a cb" style="left:219px;top:231px"><svg width="11" height="11" class="a" style="left:0;top:0"><path d="M1.5 5.8L4.5 8.7L10.3 2.8" stroke="#3a3a3a" stroke-width="1.4" fill="none"/></svg></div><div class="t" style="left:234px;top:233px;font-size:11px;letter-spacing:-0.1px">Inventory manager</div>
  <div class="a cb" style="left:219px;top:248px"><svg width="11" height="11" class="a" style="left:0;top:0"><path d="M1.5 5.8L4.5 8.7L10.3 2.8" stroke="#3a3a3a" stroke-width="1.4" fill="none"/></svg></div><div class="t" style="left:234px;top:250px;font-size:11px;letter-spacing:-0.1px">Chat</div>
  <div class="a cb" style="left:219px;top:265px"><svg width="11" height="11" class="a" style="left:0;top:0"><path d="M1.5 5.8L4.5 8.7L10.3 2.8" stroke="#3a3a3a" stroke-width="1.4" fill="none"/></svg></div><div class="t" style="left:234px;top:267px;font-size:11px;letter-spacing:-0.1px">Screen recorder</div>
  <div class="a cb" style="left:219px;top:282px"><svg width="11" height="11" class="a" style="left:0;top:0"><path d="M1.5 5.8L4.5 8.7L10.3 2.8" stroke="#3a3a3a" stroke-width="1.4" fill="none"/></svg></div><div class="t" style="left:234px;top:284px;font-size:11px;letter-spacing:-0.1px">Text message</div>
  <div class="a cb" style="left:219px;top:299px"><svg width="11" height="11" class="a" style="left:0;top:0"><path d="M1.5 5.8L4.5 8.7L10.3 2.8" stroke="#3a3a3a" stroke-width="1.4" fill="none"/></svg></div><div class="t" style="left:234px;top:301px;font-size:11px;letter-spacing:-0.1px">Remote registry</div>
  <div class="a cb" style="left:219px;top:316px"><svg width="11" height="11" class="a" style="left:0;top:0"><path d="M1.5 5.8L4.5 8.7L10.3 2.8" stroke="#3a3a3a" stroke-width="1.4" fill="none"/></svg></div><div class="t" style="left:234px;top:318px;font-size:11px;letter-spacing:-0.1px">Voice and video chat</div>
  <div class="a cb" style="left:219px;top:333px"><svg width="11" height="11" class="a" style="left:0;top:0"><path d="M1.5 5.8L4.5 8.7L10.3 2.8" stroke="#3a3a3a" stroke-width="1.4" fill="none"/></svg></div><div class="t" style="left:234px;top:335px;font-size:11px;letter-spacing:-0.1px">Remote settings</div>
  <div class="a cb" style="left:219px;top:350px"><svg width="11" height="11" class="a" style="left:0;top:0"><path d="M1.5 5.8L4.5 8.7L10.3 2.8" stroke="#3a3a3a" stroke-width="1.4" fill="none"/></svg></div><div class="t" style="left:234px;top:352px;font-size:11px;letter-spacing:-0.1px">Remote printing</div>
  <div class="a cb" style="left:219px;top:367px"><svg width="11" height="11" class="a" style="left:0;top:0"><path d="M1.5 5.8L4.5 8.7L10.3 2.8" stroke="#3a3a3a" stroke-width="1.4" fill="none"/></svg></div><div class="t" style="left:234px;top:369px;font-size:11px;letter-spacing:-0.1px">RDP</div>
  <div class="btn" style="left:220px;top:543px;width:148px;height:21px;border:2px solid #0a76d6;background:#e4e1e4;font-size:11px;line-height:17px">Check all</div>
  <div class="btn" style="left:376px;top:543px;width:148px;height:21px;border:1px solid #adadad;background:#e4e1e4;font-size:11px;line-height:19px">Uncheck all</div>
  <!-- footer -->
  <div class="a" style="left:0;top:586px;width:636px;height:1px;background:#a0a0a0"></div>
  <div class="a" style="left:0;top:587px;width:636px;height:39px;background:#f6f2f6"></div>
  <div class="t" style="left:9px;top:602px;font-size:11px">Version 7.0.0.3 (70003)</div>
  <div class="btn" style="left:422px;top:595px;width:98px;height:23px;background:#e4e1e4;font-size:11px;line-height:23px">OK</div>
  <div class="btn" style="left:528px;top:595px;width:98px;height:23px;background:#e4e1e4;font-size:11px;line-height:23px">Cancel</div>
</div>


<!-- ============ kgoffice Task Manager ============ -->
<div class="win" style="left:128px;top:186px;width:436px;height:537px;background:#f0f0f0;overflow:visible;box-shadow:2px 4px 18px rgba(0,0,0,.45)"><div class="a bd" style="left:0;top:0;right:0;bottom:0;border:1px solid #444;z-index:50"></div>
  <div class="a" style="left:1px;top:1px;width:434px;height:48px;background:#fff"></div>
  <svg class="a" style="left:9px;top:9px" width="16" height="13" viewBox="0 0 16 13"><rect width="16" height="13" fill="#2b3d52"/><path d="M1 7 L4 7 L5.5 6 L7 3 L8 10 L9 5.5 L10 7 L11 8 L12.5 7 L14 7" stroke="#e8edf2" stroke-width="0.9" fill="none"/></svg>
  <div class="t" style="left:30px;top:10px;font-size:13.2px;color:#000">kgoffice - Task Manager</div>
  <div class="a" style="left:316px;top:15px;width:11px;height:1px;background:#000"></div>
  <div class="a" style="left:361px;top:10px;width:10px;height:10px;border:1px solid #000"></div>
  <svg class="a" style="left:406px;top:10px" width="11" height="11"><path d="M0.5 0.5L10.5 10.5M10.5 0.5L0.5 10.5" stroke="#000" stroke-width="1.1"/></svg>
  <div class="t" style="left:8px;top:36px;font-size:11.5px;color:#000">File</div>
  <!-- tabs -->
  <div class="a" style="left:9px;top:79px;width:416px;height:420px;background:#fff;border:1px solid #d9d9d9"></div>
  <div class="a" style="left:73px;top:61px;width:53px;height:19px;background:#f0f0f0;border:1px solid #d9d9d9;border-bottom:none"></div>
  <div class="a" style="left:125px;top:61px;width:53px;height:19px;background:#f0f0f0;border:1px solid #d9d9d9;border-bottom:none"></div>
  <div class="a" style="left:177px;top:61px;width:41px;height:19px;background:#f0f0f0;border:1px solid #d9d9d9;border-bottom:none"></div>
  <div class="a" style="left:9px;top:59px;width:64px;height:22px;background:#fff;border:1px solid #d9d9d9;border-bottom:none"></div>
  <div class="t" style="left:16px;top:64px;font-size:11px;letter-spacing:-0.3px">Processes</div>
  <div class="t" style="left:77px;top:66px;font-size:11px;letter-spacing:-0.2px">Windows</div>
  <div class="t" style="left:131px;top:66px;font-size:11px;letter-spacing:-0.2px">Services</div>
  <div class="t" style="left:183px;top:66px;font-size:11px;letter-spacing:-0.2px">Users</div>
  <!-- listview -->
  <div class="a" style="left:23px;top:93px;width:389px;height:361px;background:#fff;border:1px solid #828790"></div>
  <div class="t" style="left:30px;top:102px;font-size:11px;letter-spacing:-0.3px">Image name</div>
  <div class="t" style="left:200px;width:33px;text-align:right;top:102px;font-size:11px">CPU</div>
  <div class="t" style="left:245px;top:102px;font-size:11px;letter-spacing:-0.2px">Session Id</div>
  <div class="t" style="left:315px;top:102px;font-size:11px">Status</div>
  <div class="a" style="left:174px;top:95px;width:1px;height:24px;background:#e5e5e5"></div>
  <div class="a" style="left:239px;top:95px;width:1px;height:24px;background:#e5e5e5"></div>
  <div class="a" style="left:308px;top:95px;width:1px;height:24px;background:#e5e5e5"></div>
  <div class="a" style="left:372px;top:95px;width:1px;height:24px;background:#e5e5e5"></div>
  <!-- buttons -->
  <div class="btn" style="left:24px;top:461px;width:39px;height:21px;background:#e1e1e1"></div>
  <svg class="a" style="left:36px;top:464px" width="16" height="16" viewBox="0 0 16 16"><defs><linearGradient id="rfg" x1="0" y1="0" x2="0" y2="1"><stop offset="0" stop-color="#a6dca6"/><stop offset="1" stop-color="#3f9e45"/></linearGradient></defs><g fill="url(#rfg)" stroke="#2f8a36" stroke-width="0.6" stroke-linejoin="round"><path d="M0.5 9 C0.8 5 4 2.5 9.3 2.3 V0.2 L13.2 3.9 L9.3 7.7 V5.3 C6 5.3 4 6.5 4 9 Z"/><path d="M15.5 7 C15.2 11 12 13.5 6.7 13.7 V15.8 L2.8 12.1 L6.7 8.3 V10.7 C10 10.7 12 9.5 12 7 Z"/></g></svg>
  <div class="btn" style="left:211px;top:461px;width:96px;height:21px;background:#e1e1e1;font-size:11px;line-height:19px">Execute</div>
  <div class="btn" style="left:315px;top:461px;width:96px;height:21px;background:#e1e1e1;font-size:11px;line-height:19px">Kill Process</div>
  <!-- refresh speed -->
  <div class="t" style="left:10px;top:511px;font-size:11px;letter-spacing:-0.2px">Refresh speed</div>
  <div class="a" style="left:138px;top:506px;width:49px;height:22px;background:#fff;border:1px solid #7a7a7a"></div>
  <div class="t" style="left:141px;top:511px;font-size:11.5px">20</div>
  <div class="a" style="left:170px;top:509px;width:13px;height:6px;background:#dadada;border:1px solid #cfcfcf"></div>
  <div class="a" style="left:170px;top:516px;width:13px;height:8px;background:#dadada;border:1px solid #cfcfcf"></div>
  <svg class="a" style="left:171px;top:510px" width="11" height="13"><path d="M2 4.5 L5.5 1 L9 4.5Z M2 8 L9 8 L5.5 11.5Z" fill="#000"/></svg>
  <div class="t" style="left:193px;top:511px;font-size:11px">sec.</div>
</div>


<svg class="a" style="left:1366px;top:253px;z-index:999" width="15" height="21" viewBox="0 0 15 21"><path d="M1.5 1.5 V17 L4.6 14 L7.3 19.8 L9.9 18.8 L7.6 13.3 H12.8Z" fill="#fff" stroke="#111" stroke-width="1.1" stroke-linejoin="round"/></svg>
</body></html>
